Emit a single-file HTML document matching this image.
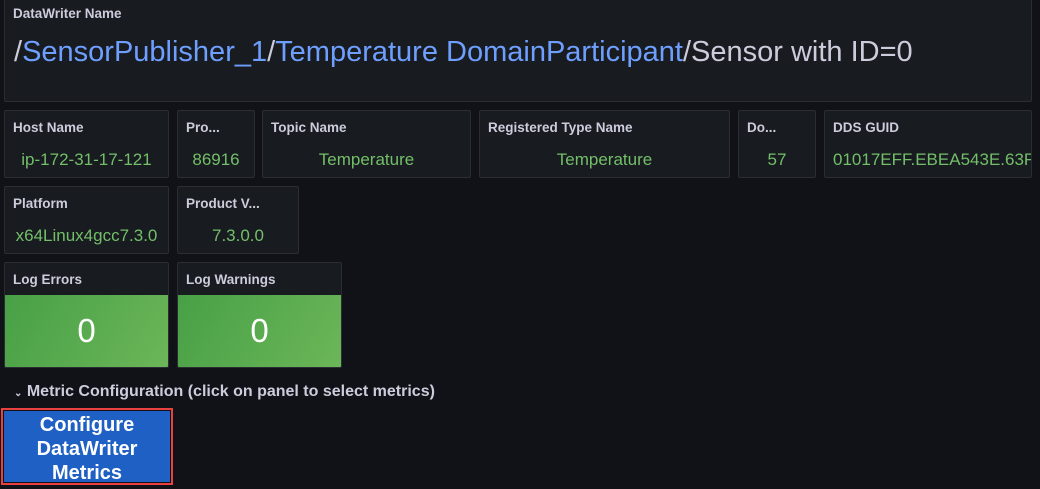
<!DOCTYPE html>
<html><head><style>
body{margin:0;width:1040px;height:489px;background:#111217;font-family:"Liberation Sans",sans-serif;overflow:hidden;position:relative}
.p{position:absolute;background:#181b1f;border:1px solid #2a2d33;border-radius:2px;box-sizing:border-box;overflow:hidden}
.t{position:absolute;left:8px;top:9px;font-size:13.5px;font-weight:bold;color:#ccccdc;white-space:nowrap}
.v{position:absolute;left:0;right:0;top:39px;text-align:center;font-size:17px;color:#73bf69;white-space:nowrap}
.g{position:absolute;left:0;right:0;top:32px;bottom:0;background:linear-gradient(120deg,#48a046,#6bb658);color:#fff;font-size:33px;text-align:center;line-height:72px}
</style></head><body>
<div class="p" style="left:4px;top:-2px;width:1028px;height:104px">
<div class="t" style="top:7px">DataWriter Name</div>
<div style="position:absolute;left:9px;top:37px;font-size:29px;color:#ccccdc;white-space:nowrap">/<span style="color:#6e9fff">SensorPublisher_1</span>/<span style="color:#6e9fff">Temperature DomainParticipant</span>/Sensor with ID=0</div>
</div>
<div class="p" style="left:4px;top:110px;width:165px;height:68px"><div class="t">Host Name</div><div class="v">ip-172-31-17-121</div></div>
<div class="p" style="left:177px;top:110px;width:78px;height:68px"><div class="t">Pro...</div><div class="v">86916</div></div>
<div class="p" style="left:262px;top:110px;width:209px;height:68px"><div class="t">Topic Name</div><div class="v">Temperature</div></div>
<div class="p" style="left:479px;top:110px;width:251px;height:68px"><div class="t">Registered Type Name</div><div class="v">Temperature</div></div>
<div class="p" style="left:738px;top:110px;width:78px;height:68px"><div class="t">Do...</div><div class="v">57</div></div>
<div class="p" style="left:824px;top:110px;width:208px;height:68px"><div class="t">DDS GUID</div><div class="v" style="text-align:left;left:8px">01017EFF.EBEA543E.63F5</div></div>
<div class="p" style="left:4px;top:186px;width:165px;height:68px"><div class="t">Platform</div><div class="v">x64Linux4gcc7.3.0</div></div>
<div class="p" style="left:177px;top:186px;width:122px;height:68px"><div class="t">Product V...</div><div class="v">7.3.0.0</div></div>
<div class="p" style="left:4px;top:262px;width:165px;height:106px"><div class="t">Log Errors</div><div class="g">0</div></div>
<div class="p" style="left:177px;top:262px;width:165px;height:106px"><div class="t">Log Warnings</div><div class="g">0</div></div>
<div style="position:absolute;left:14px;top:383px;font-size:16px;font-weight:bold;color:#ccccdc;white-space:nowrap"><span style="font-size:10px">⌄</span> Metric Configuration (click on panel to select metrics)</div>
<div style="position:absolute;left:1px;top:408px;width:172px;height:77px;border:2px solid #e8413f;box-sizing:border-box;padding:1px">
<div style="background:#1f60c4;width:100%;height:100%;color:#fff;font-size:20px;font-weight:bold;line-height:24px;text-align:center;padding-top:2px;box-sizing:border-box">Configure<br>DataWriter<br>Metrics</div></div>
</body></html>
